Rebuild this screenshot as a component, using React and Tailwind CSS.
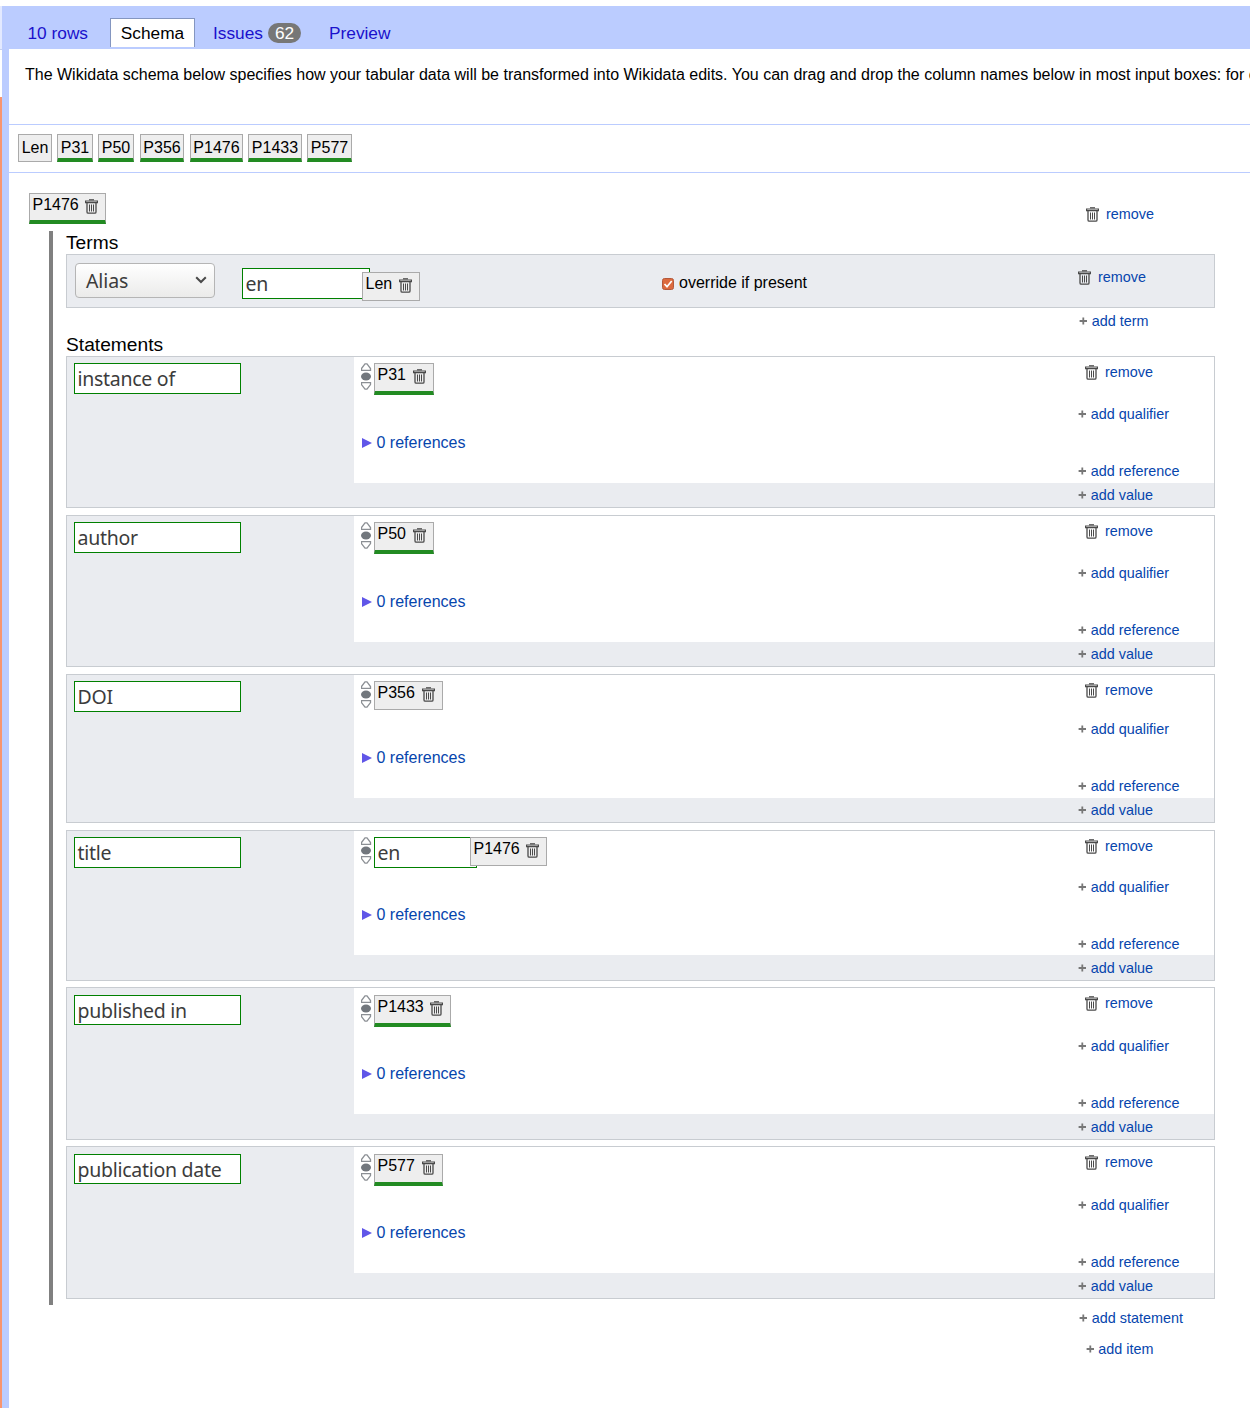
const chips = [
  ['Len', 'w-[34px] mr-[5px]', false],
  ['P31', 'w-[36px] mr-[5px]', true],
  ['P50', 'w-[36px] mr-[6px]', true],
  ['P356', 'w-[44px] mr-[6px]', true],
  ['P1476', 'w-[53px] mr-[5px]', true],
  ['P1433', 'w-[54px] mr-[5px]', true],
  ['P577', 'w-[45px]', true],
];

const statements = [
  { name: 'instance of', col: 'P31', chip: 'w-[60px]', rec: true, box: 'h-[152px] mb-[7px]', pad: 'pt-[6px]', field: 'h-[31px]', value: 'h-[126px]', qual: 'mt-[22px]', refs: 'top-[74px]', add: 'h-6 pt-[2px]' },
  { name: 'author', col: 'P50', chip: 'w-[60px]', rec: true, box: 'h-[152px] mb-[7px]', pad: 'pt-[6px]', field: 'h-[31px]', value: 'h-[126px]', qual: 'mt-[22px]', refs: 'top-[74px]', add: 'h-6 pt-[2px]' },
  { name: 'DOI', col: 'P356', chip: 'w-[69px]', rec: false, box: 'h-[149px] mb-[7px]', pad: 'pt-[6px]', field: 'h-[31px]', value: 'h-[123px]', qual: 'mt-[19px]', refs: 'top-[71px]', add: 'h-6 pt-[2px]' },
  { name: 'title', col: 'P1476', chip: 'w-[77px]', rec: false, lang: 'en', box: 'h-[151px] mb-[6px]', pad: 'pt-[6px]', field: 'h-[31px]', value: 'h-[124px]', qual: 'mt-[21px]', refs: 'top-[72px]', add: 'h-[25px] pt-[3px]' },
  { name: 'published in', col: 'P1433', chip: 'w-[77px]', rec: true, box: 'h-[153px] mb-[6px]', pad: 'pt-[7px]', field: 'h-[30px]', value: 'h-[126px]', qual: 'mt-[23px]', refs: 'top-[74px]', add: 'h-[25px] pt-[3px]' },
  { name: 'publication date', col: 'P577', chip: 'w-[69px]', rec: true, box: 'h-[153px]', pad: 'pt-[7px]', field: 'h-[30px]', value: 'h-[126px]', qual: 'mt-[23px]', refs: 'top-[74px]', add: 'h-[25px] pt-[3px]' },
];

function Trash({ className = '' }) {
  return (
    <svg className={'shrink-0 ' + className} width="13" height="15" viewBox="0 0 13 15" fill="none" stroke="#4a4a4a">
      <path d="M4 0.8h5" strokeWidth="1.2" />
      <path d="M0.6 2h11.8v1.6H0.6z" strokeWidth="1.2" />
      <path d="M2 4v9q0 1.2 1.2 1.2h6.600q1.2 0 1.2-1.2V4" strokeWidth="1.3" />
      <path d="M4.5 5.5v7M6.5 5.5v7M8.5 5.5v7" strokeWidth="1" />
    </svg>
  );
}

function Column({ label, width, height, green }) {
  return (
    <div className={'flex items-start border border-[#aaa] bg-[#eee] pl-[2.5px] ' + width + ' ' + height + (green ? ' border-b-4 border-b-[#228b22]' : '')}>
      <span className="leading-[22px]">{label}</span>
      <Trash className="ml-auto mr-[7px] mt-[5px]" />
    </div>
  );
}

function Field({ children, className }) {
  return (
    <div className={'border border-[#008000] bg-white pl-[2.5px] font-["Noto_Sans",sans-serif] text-[19.5px] leading-[29px] tracking-[-0.28px] text-[#3c3c3c] ' + className}>
      {children}
    </div>
  );
}

function Remove({ className = '' }) {
  return (
    <div className={'flex h-5 items-center text-[14.4px] text-[#0645ad] ' + className}>
      <Trash className="mr-[7.5px] mt-px" />
      <span className="mt-[2px]">remove</span>
    </div>
  );
}

function Add({ label, className = '' }) {
  return (
    <div className={'flex h-5 items-center text-[14.4px] text-[#0645ad] ' + className}>
      <svg className="mr-[4.7px]" width="8" height="8" viewBox="0 0 8 8" stroke="#777" strokeWidth="1.8">
        <path d="M4.3 0.4v7.2M0.6 4h7.4" />
      </svg>
      <span className="mt-[2px]">{label}</span>
    </div>
  );
}

function Rank() {
  return (
    <svg className="w-[11px] shrink-0" width="11" height="28" viewBox="0.5 0 11 28" fill="none" stroke="#8b8f94" strokeWidth="1.3">
      <path d="M4.5 0.9h2L10 5.5V7.4H1V5.5z" />
      <ellipse cx="5.5" cy="13.5" rx="5" ry="4" fill="#72777d" stroke="none" />
      <path d="M1 19.6h9v2L6.5 26.1h-2L1 21.6z" />
    </svg>
  );
}

function Statement({ s }) {
  return (
    <div className={'flex border border-[#c8ccd1] bg-[#eaecf0] ' + s.box}>
      <div className={'w-[287px] shrink-0 pl-[7px] ' + s.pad}>
        <Field className={'w-[167px] ' + s.field}>{s.name}</Field>
      </div>
      <div className="flex-1">
        <div className={'flex bg-white ' + s.value}>
          <div className={'relative w-[724px] pl-[7px] ' + s.pad}>
            <div className="flex items-start">
              <Rank />
              <div className="ml-[2px] flex items-start">
                {s.lang && <Field className="-mr-[7px] h-[31px] w-[103px]">{s.lang}</Field>}
                <div className={s.lang ? 'relative' : ''}>
                  <Column label={s.col} width={s.chip} height={s.rec ? 'h-8' : 'h-[29px]'} green={s.rec} />
                </div>
              </div>
            </div>
            <div className={'absolute left-[7.5px] flex h-6 items-center text-[#0645ad] ' + s.refs}>
              <svg className="mr-[5px]" width="10" height="10" viewBox="0 0 10 10" fill="#6056e8">
                <path d="M0 0l10 5-10 5z" />
              </svg>
              0 references
            </div>
          </div>
          <div className="pt-[5px]">
            <Remove className="ml-[6.5px]" />
            <Add label="add qualifier" className={s.qual} />
            <Add label="add reference" className="mt-[37px]" />
          </div>
        </div>
        <div className={'pl-[724px] ' + s.add}>
          <Add label="add value" />
        </div>
      </div>
    </div>
  );
}

export default function App() {
  return (
    <div className="flex h-[1408px] w-[1250px] overflow-hidden bg-white pt-[6px] font-['Liberation_Sans',Arial,sans-serif] text-[16px] text-black">
      <div className="flex w-[2px] shrink-0 flex-col">
        <div className="h-[43px] bg-[#e3e9ff]" />
        <div className="h-px bg-[#c5cfee]" />
        <div className="h-[47px] bg-white" />
        <div className="flex-1 bg-[#f8956f]" />
      </div>
      <div className="flex min-w-0 flex-1 flex-col bg-[#bbccff]">
        <nav className="flex h-[43px] shrink-0 items-start pt-3 text-[17.3px] leading-[30px] text-[#1a11cc]">
          <span className="ml-[25.5px] w-[82.5px]">10 rows</span>
          <span className="h-[29px] w-[85px] border border-b-0 border-[#8496c0] bg-white text-center leading-[28px] text-black">Schema</span>
          <span className="ml-[18px] w-[55px]">Issues</span>
          <span className="mt-[5px] h-5 w-[33px] rounded-[10px] bg-[#777] text-center leading-5 text-white">62</span>
          <span className="ml-7">Preview</span>
        </nav>
        <main className="ml-[7px] min-w-0 flex-1 bg-white">
          <p className="h-[75px] overflow-hidden whitespace-nowrap pl-4 pt-[14px] leading-6">
            The Wikidata schema below specifies how your tabular data will be transformed into Wikidata edits. You can drag and drop the column names below in most input boxes: for e
          </p>
          <div className="flex h-[49px] items-start border-y border-[#bbccff] pl-[9px] pt-[9px]">
            {chips.map(([label, width, green]) => (
              <div key={label} className={'h-7 border border-[#aaa] bg-[#eee] text-center leading-[25px] ' + width + (green ? ' border-b-4 border-b-[#228b22]' : '')}>
                {label}
              </div>
            ))}
          </div>
          <div className="flex h-[58px] items-start pl-5 pt-5">
            <Column label="P1476" width="w-[77px]" height="h-[31px]" green />
            <Remove className="ml-[979.5px] mt-[11px]" />
          </div>
          <section className="ml-10 h-[1074px] w-[1166px] border-l-4 border-[#808080] pl-[13px]">
            <h2 className="h-[23px] text-[19.2px] leading-[23px]">Terms</h2>
            <div className="flex h-[54px] items-start border border-[#c8ccd1] bg-[#eaecf0]">
              <div className="ml-2 mt-2 flex h-[35px] w-[140px] items-center justify-between rounded-[4px] border border-[#b5b5b5] bg-gradient-to-b from-white to-[#ebebea] pl-[10px] pr-[7px] font-['Noto_Sans',sans-serif] text-[19.5px] tracking-[-0.1px] text-[#3c3c3c]">
                Alias
                <svg className="mb-[2px]" width="12" height="8" viewBox="0 0 12 8" fill="none" stroke="#4a4a4a" strokeWidth="2">
                  <path d="M1.2 1.2L6 6l4.8-4.8" />
                </svg>
              </div>
              <Field className="ml-[27px] mt-[13px] h-[31px] w-[128px]">en</Field>
              <div className="relative -ml-2 mt-[17px]">
                <Column label="Len" width="w-[58px]" height="h-[29px]" />
              </div>
              <div className="ml-[242px] mt-[18px] flex h-5 items-center">
                <svg className="mr-[5px] mt-px" width="12" height="12" viewBox="0 0 12 12" fill="none">
                  <rect x="0.5" y="0.5" width="11" height="11" rx="2" fill="#dc6a3e" stroke="#b4583a" />
                  <path d="M2.5 6l2.5 2.7L9.7 3" stroke="white" strokeWidth="1.7" />
                </svg>
                override if present
              </div>
              <Remove className="ml-[270.5px] mt-3" />
            </div>
            <Add label="add term" className="ml-[1013px] mt-[3px]" />
            <h2 className="-mt-px mb-px h-[25px] pt-[3px] text-[19.2px] leading-[23px]">Statements</h2>
            {statements.map((s) => (
              <Statement key={s.name} s={s} />
            ))}
          </section>
          <Add label="add statement" className="ml-[1070px] mt-[3px]" />
          <Add label="add item" className="ml-[1076.5px] mt-[11px]" />
        </main>
      </div>
    </div>
  );
}
